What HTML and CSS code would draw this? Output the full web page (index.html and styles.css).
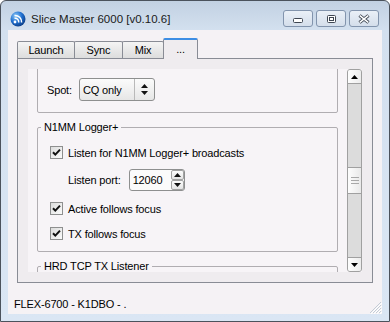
FILE: index.html
```html
<!DOCTYPE html>
<html lang="en">
<head>
    <meta charset="UTF-8">
    <title>Slice Master 6000</title>
    <link rel="stylesheet" href="styles.css">
</head>
<body>
    <div class="window">
        <div class="titlebar">
            <svg class="app-icon" viewBox="0 0 16 16">
                <defs>
                    <radialGradient id="ball" cx="35%" cy="30%" r="75%">
                        <stop offset="0" stop-color="#8cc8f7"/>
                        <stop offset="0.55" stop-color="#1f6fd0"/>
                        <stop offset="1" stop-color="#0b3c85"/>
                    </radialGradient>
                </defs>
                <circle cx="8" cy="8" r="7.5" fill="url(#ball)"/>
                <circle cx="5" cy="11" r="1.4" fill="#fff"/>
                <path d="M4.5 7.3a3.7 3.7 0 0 1 4.2 4.2" stroke="#fff" stroke-width="1.5" fill="none"/>
                <path d="M4.5 4.4a6.6 6.6 0 0 1 7.1 7.1" stroke="#fff" stroke-width="1.5" fill="none"/>
            </svg>
            <span class="title">Slice Master 6000 [v0.10.6]</span>
            <div class="caption-buttons">
                <div class="cap-btn cap-min">
                    <svg width="10" height="5" viewBox="0 0 10 5"><rect x="0.5" y="0.5" width="9" height="4" rx="1" fill="#fff" stroke="#3e4652"/></svg>
                </div>
                <div class="cap-btn cap-max">
                    <svg width="9" height="8" viewBox="0 0 9 8"><rect x="0.5" y="0.5" width="8" height="7" rx="1" fill="#fff" stroke="#3e4652"/><rect x="2.5" y="2.5" width="4" height="3" fill="none" stroke="#3e4652"/></svg>
                </div>
                <div class="cap-btn cap-close">
                    <svg width="12" height="10" viewBox="0 0 12 10">
                        <path d="M1.5 1.5L10.5 8.5M10.5 1.5L1.5 8.5" stroke="#3e4652" stroke-width="3.4"/>
                        <path d="M1.8 1.7L10.2 8.3M10.2 1.7L1.8 8.3" stroke="#fff" stroke-width="1.5"/>
                    </svg>
                </div>
            </div>
        </div>

        <div class="client">
            <div class="tabs">
                <div class="tab-strip">
                    <div class="tab tab-launch">Launch</div>
                    <div class="tab tab-sync">Sync</div>
                    <div class="tab tab-mix">Mix</div>
                    <div class="tab tab-more active">...</div>
                </div>
                <div class="tab-page">
                    <div class="scroll-view">
                        <div class="scroll-content">
                            <fieldset class="group group-spot">
                                <div class="field">
                                    <span>Spot:</span>
                                    <div class="combo">
                                        <span class="combo-text">CQ only</span>
                                        <span class="combo-arrow">
                                            <svg width="7" height="11" viewBox="0 0 7 11"><path d="M3.5 0L7 4H0z M0 7H7L3.5 11z" fill="#111"/></svg>
                                        </span>
                                    </div>
                                </div>
                            </fieldset>

                            <fieldset class="group group-n1mm">
                                <legend>N1MM Logger+</legend>
                                <label class="check-row">
                                    <span class="checkbox"><svg width="11" height="11" viewBox="0 0 11 11"><path d="M2 5.2L4.3 7.6L9 2.6" stroke="#111" stroke-width="2" fill="none"/></svg></span>
                                    Listen for N1MM Logger+ broadcasts
                                </label>
                                <div class="field port-row">
                                    <span>Listen port:</span>
                                    <div class="spinner">
                                        <span class="spinner-value">12060</span>
                                        <span class="spin-buttons">
                                            <span class="spin-btn"><svg width="7" height="4" viewBox="0 0 7 4"><path d="M3.5 0L7 4H0z" fill="#111"/></svg></span>
                                            <span class="spin-btn"><svg width="7" height="4" viewBox="0 0 7 4"><path d="M0 0H7L3.5 4z" fill="#111"/></svg></span>
                                        </span>
                                    </div>
                                </div>
                                <label class="check-row active-row">
                                    <span class="checkbox"><svg width="11" height="11" viewBox="0 0 11 11"><path d="M2 5.2L4.3 7.6L9 2.6" stroke="#111" stroke-width="2" fill="none"/></svg></span>
                                    Active follows focus
                                </label>
                                <label class="check-row tx-row">
                                    <span class="checkbox"><svg width="11" height="11" viewBox="0 0 11 11"><path d="M2 5.2L4.3 7.6L9 2.6" stroke="#111" stroke-width="2" fill="none"/></svg></span>
                                    TX follows focus
                                </label>
                            </fieldset>

                            <fieldset class="group group-hrd">
                                <legend>HRD TCP TX Listener</legend>
                            </fieldset>
                        </div>

                        <div class="scrollbar">
                            <div class="scroll-btn up"><svg width="7" height="4" viewBox="0 0 7 4"><path d="M3.5 0L7 4H0z" fill="#000"/></svg></div>
                            <div class="scroll-track track-top"></div>
                            <div class="scroll-thumb">
                                <svg width="8" height="7" viewBox="0 0 8 7"><path d="M0 0.5H8M0 3.5H8M0 6.5H8" stroke="#a8a8a8"/></svg>
                            </div>
                            <div class="scroll-track track-bottom"></div>
                            <div class="scroll-btn down"><svg width="7" height="4" viewBox="0 0 7 4"><path d="M0 0H7L3.5 4z" fill="#000"/></svg></div>
                        </div>
                    </div>
                </div>
            </div>

            <div class="status">
                <span>FLEX-6700 - K1DBO - .</span>
                <svg class="grip" width="14" height="14" viewBox="0 0 14 14">
                    <path d="M13 2L2 13M13 5L5 13M13 8L8 13M13 11L11 13" stroke="#c3ccd6"/>
                    <path d="M14 3L3 14M14 6L6 14M14 9L9 14M14 12L12 14" stroke="#fff"/>
                </svg>
            </div>
        </div>
    </div>
</body>
</html>
```

FILE: styles.css
```css
* {
    box-sizing: border-box;
}

body {
    margin: 0;
    background: #fff;
    font-family: "Liberation Sans", Arial, sans-serif;
    font-size: 11px;
    letter-spacing: -0.15px;
    color: #000;
}

/* Window frame */
.window {
    width: 390px;
    height: 322px;
    display: flex;
    flex-direction: column;
    padding: 0 7px 7px 7px;
    border: 1px solid #4b525c;
    border-radius: 6px 6px 0 0;
    background: linear-gradient(#c2d1e2, #d3e0ef 29px, #dae6f4);
}

.titlebar {
    height: 29px;
    display: flex;
    align-items: center;
    padding: 6px 0 0 2px;
}

.app-icon {
    width: 16px;
    height: 16px;
    margin-right: 5px;
}

.title {
    font-size: 11.5px;
    letter-spacing: 0;
    color: #1a1a1a;
}

.caption-buttons {
    display: flex;
    gap: 3px;
    margin-left: auto;
    margin-right: 3px;
}

.cap-btn {
    width: 30px;
    height: 17px;
    display: flex;
    align-items: center;
    justify-content: center;
    border: 1px solid #8294ad;
    border-radius: 3px;
    background: linear-gradient(#eaf0f7, #d4deeb);
}

.cap-min {
    align-items: flex-end;
    padding-bottom: 3px;
}

/* Client area */
.client {
    flex: 1;
    display: flex;
    flex-direction: column;
    background: #f5f2f5;
}

.tabs {
    margin: 8px 9px 0;
}

.tab-strip {
    height: 20px;
    display: flex;
    align-items: flex-end;
}

.tab {
    height: 17px;
    margin-right: -1px;
    border: 1px solid #898c95;
    border-bottom: none;
    border-radius: 2px 2px 0 0;
    background: linear-gradient(#f4f4f4, #e8e8e8 50%, #dddddd);
    text-align: center;
    line-height: 17px;
}

.tab-launch { width: 58px; }
.tab-sync { width: 49px; }
.tab-mix { width: 42px; }
.tab-more { width: 35px; }

.tab.active {
    position: relative;
    height: 21px;
    margin-bottom: -1px;
    border-top: 2px solid #3d8ee4;
    background: #efecef;
    line-height: 19px;
}

.tab-page {
    height: 225px;
    padding: 10px;
    border: 1px solid #898c95;
    background: #efecef;
}

.scroll-view {
    height: 203px;
    display: flex;
    background: #f7f4f7;
}

.scroll-content {
    flex: 1;
    overflow: hidden;
    padding: 0 9px;
}

/* Group boxes */
.group {
    min-width: 0;
    margin: 8px 0 0;
    padding: 0;
    border: 1px solid #b0adb1;
    border-radius: 2px;
}

.group legend {
    margin-left: -9px;
    padding: 0 3px;
    line-height: 13px;
}

.group-spot {
    margin-top: -10px;
    padding: 18px 0 11px 9px;
}

.group-n1mm {
    padding: 12px 0 11px 12px;
}

.group-hrd {
    height: 40px;
    padding-left: 12px;
}

.field {
    display: flex;
    align-items: center;
}

.combo {
    width: 76px;
    height: 23px;
    margin-left: 7px;
    display: flex;
    align-items: center;
    border: 1px solid #8e8f8f;
    border-radius: 3px;
    background: linear-gradient(#fbfbfb, #f1f1f1 50%, #e6e6e6);
}

.combo-text {
    flex: 1;
    padding-left: 3px;
}

.combo-arrow {
    width: 20px;
    height: 100%;
    display: flex;
    align-items: center;
    justify-content: center;
    border-left: 1px solid #b9b9b9;
}

.check-row {
    height: 13px;
    display: flex;
    align-items: center;
}

.checkbox {
    width: 13px;
    height: 13px;
    margin-right: 5px;
    display: flex;
    align-items: center;
    justify-content: center;
    border: 1px solid #8e8f8f;
    background: linear-gradient(135deg, #dcdcdc, #fbfbfb);
}

.port-row {
    height: 22px;
    margin-top: 10px;
    padding-left: 18px;
}

.active-row {
    margin-top: 11px;
}

.tx-row {
    margin-top: 12px;
}

.spinner {
    width: 56px;
    height: 22px;
    margin-left: 8px;
    display: flex;
    border: 1px solid #8e8f8f;
    border-radius: 3px;
    background: #fbfbfb;
}

.spinner-value {
    flex: 1;
    padding-left: 3px;
    line-height: 20px;
}

.spin-buttons {
    width: 13px;
    display: flex;
    flex-direction: column;
}

.spin-btn {
    flex: 1;
    display: flex;
    align-items: center;
    justify-content: center;
    border: 1px solid #a3a3a3;
    border-radius: 2px;
    background: linear-gradient(#fdfdfd, #e4e4e4);
}

/* Scrollbar */
.scrollbar {
    width: 15px;
    display: flex;
    flex-direction: column;
    border: 1px solid #a0a0a0;
    border-radius: 3px;
    background: #dcdcdc;
}

.scroll-btn {
    height: 14px;
    display: flex;
    align-items: center;
    justify-content: center;
    background: linear-gradient(90deg, #fdfdfd, #ececec);
}

.scroll-btn.up {
    border-bottom: 1px solid #a0a0a0;
    border-radius: 2px 2px 0 0;
}

.scroll-btn.down {
    border-top: 1px solid #a0a0a0;
    border-radius: 0 0 2px 2px;
}

.track-top {
    height: 83px;
}

.track-bottom {
    flex: 1;
}

.scroll-thumb {
    height: 27px;
    display: flex;
    align-items: center;
    justify-content: center;
    border-top: 1px solid #a0a0a0;
    border-bottom: 1px solid #a0a0a0;
    background: linear-gradient(90deg, #fdfdfd, #e9e9e9);
}

/* Status line */
.status {
    flex: 1;
    display: flex;
    padding: 14px 0 0 6px;
    line-height: 14px;
}

.grip {
    margin-left: auto;
    align-self: flex-end;
}
```
